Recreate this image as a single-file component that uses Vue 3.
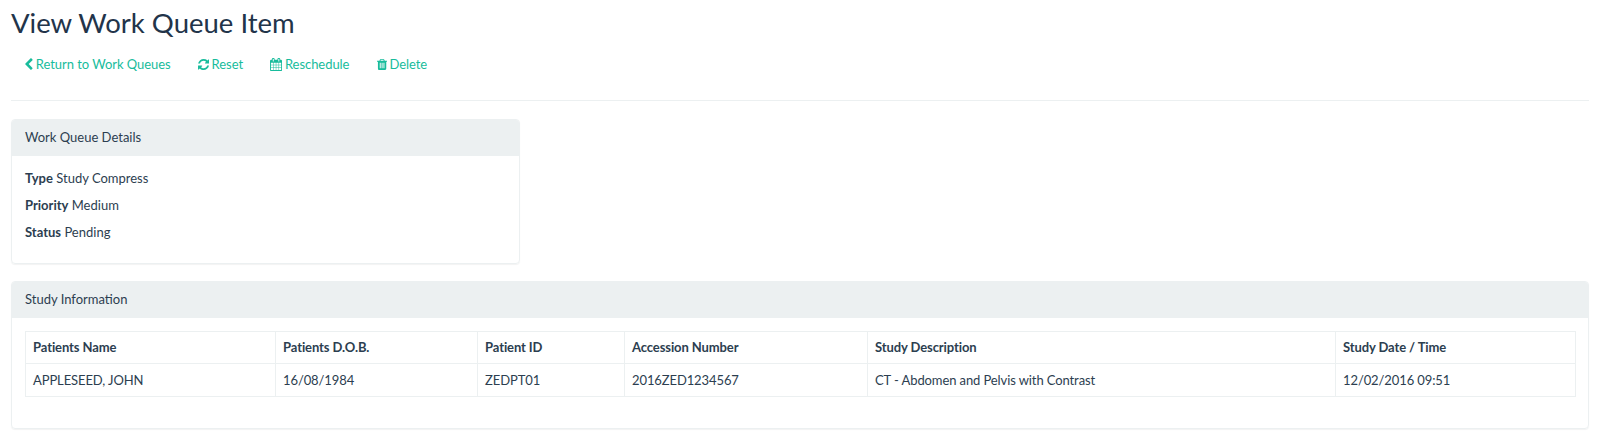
<script setup>
const icons = {
  back: { box: '256 0 1280 1792', w: 9.3, d: 'M1427 301l-531 531 531 531q19 19 19 45t-19 45l-166 166q-19 19-45 19t-45-19l-742-742q-19-19-19-45t19-45l742-742q19-19 45-19t45 19l166 166q19 19 19 45t-19 45z' },
  refresh: { box: '128 0 1536 1792', w: 11.2, d: 'M1639 1056q0 5-1 7-64 268-268 434.5t-478 166.5q-146 0-282.5-55t-243.5-157l-129 129q-19 19-45 19t-45-19-19-45v-448q0-26 19-45t45-19h448q26 0 45 19t19 45-19 45l-137 137q71 66 161 102t187 36q134 0 250-65t186-179q11-17 53-117 8-23 30-23h192q13 0 22.5 9.5t9.5 22.5zm25-800v448q0 26-19 45t-45 19h-448q-26 0-45-19t-19-45 19-45l138-138q-148-137-349-137-134 0-250 65t-186 179q-11 17-53 117-8 23-30 23h-199q-13 0-22.5-9.5t-9.5-22.5v-7q65-268 270-434.5t480-166.5q146 0 284 55.5t245 156.5l130-129q19-19 45-19t45 19 19 45z' },
  calendar: { box: '64 0 1664 1792', w: 12.1, d: 'M192 1664h288v-288h-288v288zm352 0h320v-288h-320v288zm-352-352h288v-320h-288v320zm352 0h320v-320h-320v320zm-352-384h288v-288h-288v288zm736 736h320v-288h-320v288zm-384-736h320v-288h-320v288zm768 736h288v-288h-288v288zm-384-352h320v-320h-320v320zm-352-864v-288q0-13-9.5-22.5t-22.5-9.5h-64q-13 0-22.5 9.5t-9.5 22.5v288q0 13 9.5 22.5t22.5 9.5h64q13 0 22.5-9.5t9.5-22.5zm736 864h288v-320h-288v320zm-384-384h320v-288h-320v288zm384 0h288v-288h-288v288zm32-480v-288q0-13-9.5-22.5t-22.5-9.5h-64q-13 0-22.5 9.5t-9.5 22.5v288q0 13 9.5 22.5t22.5 9.5h64q13 0 22.5-9.5t9.5-22.5zm384-64v1280q0 52-38 90t-90 38h-1408q-52 0-90-38t-38-90v-1280q0-52 38-90t90-38h128v-96q0-66 47-113t113-47h64q66 0 113 47t47 113v96h384v-96q0-66 47-113t113-47h64q66 0 113 47t47 113v96h128q52 0 90 38t38 90z' },
  trash: { box: '192 0 1408 1792', w: 10.2, d: 'M704 1376v-704q0-14-9-23t-23-9h-64q-14 0-23 9t-9 23v704q0 14 9 23t23 9h64q14 0 23-9t9-23zm256 0v-704q0-14-9-23t-23-9h-64q-14 0-23 9t-9 23v704q0 14 9 23t23 9h64q14 0 23-9t9-23zm256 0v-704q0-14-9-23t-23-9h-64q-14 0-23 9t-9 23v704q0 14 9 23t23 9h64q14 0 23-9t9-23zm-544-992h448l-48-117q-7-9-17-11h-317q-10 2-17 11zm928 32v64q0 14-9 23t-23 9h-96v948q0 83-47 143.5t-113 60.5h-832q-66 0-113-58.5t-47-141.5v-952h-96q-14 0-23-9t-9-23v-64q0-14 9-23t23-9h309l70-167q15-37 54-63t79-26h320q40 0 79 26t54 63l70 167h309q14 0 23 9t9 23z' }
}
const actions = [
  { label: 'Return to Work Queues', icon: 'back' },
  { label: 'Reset', icon: 'refresh' },
  { label: 'Reschedule', icon: 'calendar' },
  { label: 'Delete', icon: 'trash' }
]
const details = [
  ['Type', 'Study Compress'],
  ['Priority', 'Medium'],
  ['Status', 'Pending']
]
const columns = [
  { title: 'Patients Name', value: 'APPLESEED, JOHN', width: 250 },
  { title: 'Patients D.O.B.', value: '16/08/1984', width: 202 },
  { title: 'Patient ID', value: 'ZEDPT01', width: 147 },
  { title: 'Accession Number', value: '2016ZED1234567', width: 243 },
  { title: 'Study Description', value: 'CT - Abdomen and Pelvis with Contrast', width: 468 },
  { title: 'Study Date / Time', value: '12/02/2016 09:51', width: 240 }
]
</script>

<template>
  <div class="page">
    <h1 class="title">View Work Queue Item</h1>
    <nav class="actions">
      <a v-for="a in actions" :key="a.label" class="action" href="#" @click.prevent>
        <svg class="icon" :viewBox="icons[a.icon].box" :style="{ width: icons[a.icon].w + 'px' }"><path :d="icons[a.icon].d" fill="currentColor" /></svg>
        <span>{{ a.label }}</span>
      </a>
    </nav>
    <hr class="rule" />
    <section class="panel panel-small">
      <header class="panel-head">Work Queue Details</header>
      <div class="panel-body details">
        <p v-for="d in details" :key="d[0]"><strong>{{ d[0] }}</strong> {{ d[1] }}</p>
      </div>
    </section>
    <section class="panel">
      <header class="panel-head">Study Information</header>
      <div class="panel-body">
        <table class="table">
          <colgroup>
            <col v-for="c in columns" :key="c.title" :style="{ width: c.width + 'px' }" />
          </colgroup>
          <thead>
            <tr><th v-for="c in columns" :key="c.title">{{ c.title }}</th></tr>
          </thead>
          <tbody>
            <tr><td v-for="c in columns" :key="c.title">{{ c.value }}</td></tr>
          </tbody>
        </table>
      </div>
    </section>
  </div>
</template>

<style scoped>
.page {
  padding: 0 11px;
  font-family: Lato, "Open Sans", sans-serif;
  font-size: 13px;
  line-height: 18px;
  color: #2c3e50;
}
.title {
  margin: 0;
  padding-top: 7px;
  font-size: 27.5px;
  line-height: 32px;
  font-weight: 400;
  color: #22344a;
}
.actions {
  display: flex;
  gap: 27.3px;
  padding: 16px 13px 0;
}
.action {
  display: flex;
  align-items: center;
  gap: 2.5px;
  color: #18bc9c;
  text-decoration: none;
  letter-spacing: -0.05px;
}
.icon {
  height: 13px;
  flex: none;
}
.rule {
  margin: 27px 0 18px;
  border: 0;
  border-top: 1px solid #ecf0f1;
}
.panel {
  box-sizing: border-box;
  margin-bottom: 17px;
  border: 1px solid #ecf0f1;
  border-radius: 4px;
  box-shadow: 0 1px 1px rgba(0, 0, 0, 0.05);
  overflow: hidden;
}
.panel-small {
  width: 509px;
}
.panel-head {
  height: 36px;
  padding: 0 13px;
  background: #ecf0f1;
  line-height: 35px;
}
.panel-body {
  padding: 13px 13px 31px;
}
.details {
  padding-bottom: 13px;
}
.details p {
  margin: 0 0 9px;
}
.details strong {
  font-weight: 700;
}
.table {
  width: 100%;
  border-collapse: collapse;
  table-layout: fixed;
  letter-spacing: -0.1px;
}
th, td {
  padding: 7px;
  border: 1px solid #ecf0f1;
  text-align: left;
  line-height: 18px;
}
th {
  padding-top: 6px;
  font-weight: 700;
}
</style>
